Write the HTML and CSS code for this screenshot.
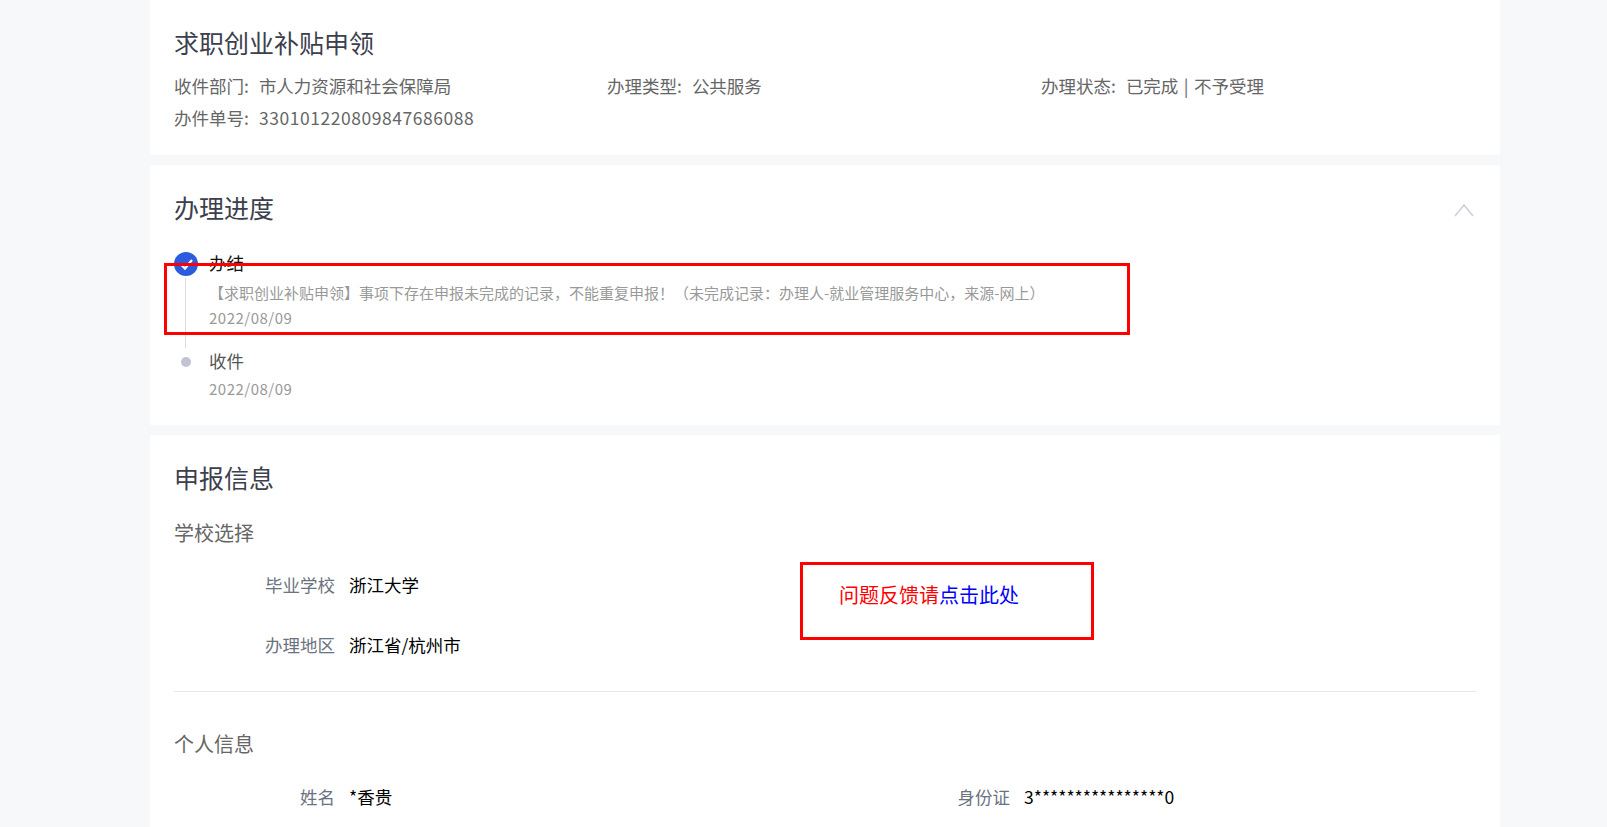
FILE: index.html
```html
<!DOCTYPE html>
<html lang="zh-CN">
<head>
<meta charset="utf-8">
<title>求职创业补贴申领</title>
<link rel="stylesheet" href="styles.css">
</head>
<body>
<main class="page">
  <section class="card card-summary">
    <h1 class="heading">求职创业补贴申领</h1>
    <div class="meta-grid">
      <div class="meta-item"><span>收件部门:</span><span>市人力资源和社会保障局</span></div>
      <div class="meta-item"><span>办理类型:</span><span>公共服务</span></div>
      <div class="meta-item"><span>办理状态:</span><span class="meta-status">已完成 | 不予受理</span></div>
      <div class="meta-item"><span>办件单号:</span><span class="meta-number">330101220809847686088</span></div>
    </div>
  </section>

  <section class="card card-progress">
    <div class="heading-row">
      <h2 class="heading">办理进度</h2>
      <svg class="chevron" width="20" height="14" viewBox="0 0 20 14"><path d="M1 13 L10 2 L19 13" fill="none" stroke="#cdd1d9" stroke-width="1.600"/></svg>
    </div>
    <ol class="timeline">
      <li class="step step-done">
        <span class="step-icon"><svg width="24" height="24" viewBox="0 0 24 24"><circle cx="12" cy="12" r="12" fill="#2b5ce0"/><path d="M7 12.500 L11 16.500 L18 8" fill="none" stroke="#fff" stroke-width="2.200"/></svg></span>
        <div class="step-body">
          <div class="step-title step-title-dark">办结</div>
          <div class="step-desc">【求职创业补贴申领】事项下存在申报未完成的记录，不能重复申报！（未完成记录：办理人-就业管理服务中心，来源-网上）</div>
          <div class="step-date">2022/08/09</div>
        </div>
      </li>
      <li class="step">
        <span class="step-icon"><span class="dot"></span></span>
        <div class="step-body">
          <div class="step-title">收件</div>
          <div class="step-date step-date-last">2022/08/09</div>
        </div>
      </li>
    </ol>
  </section>

  <section class="card card-form">
    <h2 class="heading">申报信息</h2>
    <h3 class="subheading">学校选择</h3>
    <div class="form-rows">
      <div class="field"><span class="field-label">毕业学校</span><span class="field-value">浙江大学</span></div>
      <div class="field"><span class="field-label">办理地区</span><span class="field-value">浙江省/杭州市</span></div>
    </div>
    <hr class="divider">
    <h3 class="subheading">个人信息</h3>
    <div class="form-cols">
      <div class="field"><span class="field-label">姓名</span><span class="field-value">*香贵</span></div>
      <div class="field"><span class="field-label">身份证</span><span class="field-value">3****************0</span></div>
    </div>
  </section>
</main>
<div class="mark mark-notice"></div>
<div class="mark mark-feedback"><span class="fb-red">问题反馈请</span><span class="fb-blue">点击此处</span></div>
</body>
</html>
```

FILE: styles.css
```css
* { box-sizing: border-box; }
html, body { margin: 0; padding: 0; height: 827px; overflow: hidden; background: #f7f8fa; }
body { font-family: "Noto Sans CJK SC", "Noto Sans", sans-serif; color: #666; position: relative; }
.page { width: 1350px; margin-left: 150px; display: flex; flex-direction: column; gap: 10px; }
.card { background: #fff; padding: 0 24px; }
.card-summary { height: 155px; padding-top: 24px; }
.card-progress { height: 260px; padding-top: 24px; position: relative; }
.card-form { padding-top: 24px; height: 500px; }
.heading { margin: 0; font-size: 25px; font-weight: 400; line-height: 36px; color: #3c3f4d; }
.meta-grid { display: grid; grid-template-columns: 433px 434px 1fr; margin-top: 10px; }
.meta-item { font-size: 17.500px; line-height: 32px; color: #666; display: flex; gap: 10px; }
.meta-number { letter-spacing: 0.550px; }
.meta-status { word-spacing: 1.500px; }
.heading-row { display: flex; justify-content: space-between; align-items: center; }
.chevron { margin-right: 2px; margin-top: 6px; }
.timeline { list-style: none; margin: 27px 0 0; padding: 0; }
.step { display: flex; gap: 11px; position: relative; }
.step-done { height: 98px; }
.step-done::after { content: ""; position: absolute; left: 11px; top: 26px; bottom: 2px; width: 1px; background: #dcdcdc; }
.step-icon { width: 24px; height: 24px; flex: none; display: flex; align-items: center; justify-content: center; }
.dot { width: 10px; height: 10px; border-radius: 50%; background: #c0c4d4; }
.step-title { font-size: 17.500px; line-height: 22px; color: #555; }
.step-title-dark { color: #111; }
.step-desc { font-size: 15px; line-height: 20px; color: #999; margin-top: 9px; white-space: nowrap; }
.step-date { font-size: 15px; letter-spacing: 0.500px; line-height: 20px; color: #999; margin-top: 5px; }
.step-date-last { margin-top: 7px; }
.subheading { margin: 24px 0 0; font-size: 20px; font-weight: 400; line-height: 28px; color: #666; }
.form-rows { display: flex; flex-direction: column; gap: 30px; margin-top: 22px; }
.field { display: flex; align-items: center; gap: 14px; height: 30px; }
.field-label { width: 161px; text-align: right; font-size: 17.500px; color: #6b7280; flex: none; }
.field-value { font-size: 17.500px; color: #000; }
.divider { border: 0; border-top: 1px solid #e8e8e8; margin: 32px 0 38px; }
.form-cols { display: grid; grid-template-columns: 675px 1fr; margin-top: 23px; }
.mark { position: absolute; border: 3px solid #f00; }
.mark-notice { left: 164px; top: 263px; width: 966px; height: 72px; }
.mark-feedback { left: 800px; top: 562px; width: 294px; height: 78px; padding: 16px 0 0 36px; font-size: 20px; line-height: 28px; }
.fb-red { color: #f00; }
.fb-blue { color: #00f; }
```
